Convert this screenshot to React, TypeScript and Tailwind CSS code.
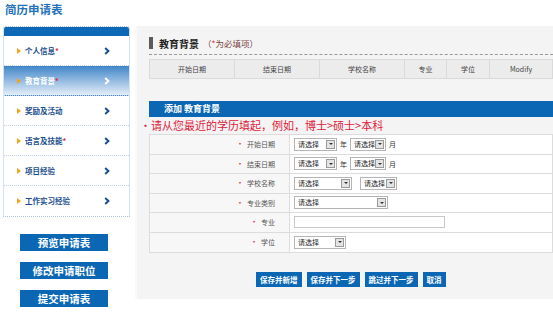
import React from "react";

const navItems = [
  { label: "个人信息", req: true },
  { label: "教育背景", req: true, active: true },
  { label: "奖励及活动" },
  { label: "语言及技能", req: true },
  { label: "项目经验" },
  { label: "工作实习经验" },
];

const columns = [
  { label: "开始日期", w: "w-[85px]" },
  { label: "结束日期", w: "w-[85px]" },
  { label: "学校名称", w: "w-[85px]" },
  { label: "专业", w: "w-[42px]" },
  { label: "学位", w: "w-[43px]" },
  { label: "Modify", w: "flex-1" },
];

function Select({ w, text = "请选择" }: { w: string; text?: string }) {
  return (
    <div className={`${w} h-[13px] flex items-center bg-white border border-[#b5b5b5] pl-[3px] pr-[1px]`}>
      <span className="flex-1 text-[7px] leading-none text-[#222]">{text}</span>
      <span className="w-[9px] h-[9px] bg-[#e4e4e4] border border-[#9a9a9a] flex items-center justify-center">
        <span className="w-0 h-0 border-l-[2px] border-r-[2px] border-t-[2px] border-l-transparent border-r-transparent border-t-[#333]" />
      </span>
    </div>
  );
}

function Row({ label, children }: { label: string; children: React.ReactNode }) {
  return (
    <div className="flex h-[19.5px] border-b border-[#dcdcdc] last:border-b-0">
      <div className="w-[140px] flex items-center justify-end pr-[14px] border-r border-[#dcdcdc] bg-[#f7f7f7] text-[7px] text-[#555]">
        <span className="text-[#e0303a] mr-[3px] text-[8px]">•</span>
        {label}
      </div>
      <div className="flex-1 flex items-center pl-[4px] gap-[3px] bg-white text-[7px] text-[#333]">{children}</div>
    </div>
  );
}

export default function App() {
  return (
    <div className="w-[553px] h-[312px] overflow-hidden bg-white font-['Noto_Sans_CJK_SC',sans-serif]">
      <div className="h-[26px] pl-[5px] pt-[2px] text-[11.5px] leading-[14px] font-bold text-[#2472b8]">简历申请表</div>

      <div className="flex">
        {/* Sidebar */}
        <div className="w-[135px] shrink-0 pl-[3px]">
          <div className="w-[127px] border border-dotted border-[#a9c3dd] rounded-t-[3px] overflow-hidden">
            <div className="h-[9px] bg-[#0d69b5]" />
            {navItems.map((it) => (
              <div
                key={it.label}
                className={`h-[30px] flex items-center pl-[13px] pr-[19px] border-b border-dotted border-[#c3d3e3] last:border-b-0 ${
                  it.active ? "bg-gradient-to-b from-[#3f86c7] to-[#e4eef8]" : "bg-white"
                }`}
              >
                <span className="w-0 h-0 border-t-[3px] border-b-[3px] border-l-[4px] border-t-transparent border-b-transparent border-l-[#f2a41a] mr-[4px]" />
                <span className={`flex-1 text-[7.5px] font-bold ${it.active ? "text-white" : "text-[#1c4f8e]"}`}>
                  {it.label}
                  {it.req && <span className="text-[#e0303a]">*</span>}
                </span>
                <svg width="6" height="8" viewBox="0 0 6 8" className={it.active ? "text-white" : "text-[#1c4f8e]"}>
                  <path d="M1.2 1 L4.4 4 L1.2 7" fill="none" stroke="currentColor" strokeWidth="2" />
                </svg>
              </div>
            ))}
          </div>
          <div className="mt-[17px] ml-[17px] flex flex-col gap-[11px]">
            {["预览申请表", "修改申请职位", "提交申请表"].map((b) => (
              <div key={b} className="w-[88px] h-[17px] bg-[#0b67b3] flex items-center justify-center text-[10.5px] font-bold text-white">
                {b}
              </div>
            ))}
          </div>
        </div>

        {/* Main panel */}
        <div className="flex-1 h-[273px] bg-[#f4f4f4] border-l-2 border-[#fafafa] pl-[12px] pt-[11px]">
          <div className="flex items-center h-[12px]">
            <span className="w-[4px] h-[12px] bg-[#5a5a5a] mr-[6px]" />
            <span className="text-[10px] font-bold text-[#222]">教育背景</span>
            <span className="ml-[4px] text-[8.5px] text-[#7b4545]">
              （<span className="text-[#e0303a]">*</span>为必填项）
            </span>
          </div>
          <div className="mt-[5px] border-t border-dashed border-[#9a9a9a]" />
          <div className="mt-[4px] h-[20px] flex bg-[#ececec] border border-[#dadada]">
            {columns.map((c) => (
              <div key={c.label} className={`${c.w} flex items-center justify-center text-[7px] text-[#444] border-r border-[#dadada] last:border-r-0`}>
                {c.label}
              </div>
            ))}
          </div>

          <div className="mt-[22px] h-[16px] bg-[#0b67b3] flex items-center pl-[15px] text-[9px] font-bold text-white">添加 教育背景</div>
          <div className="ml-[-9px] h-[17px] flex items-center text-[11px] text-[#e0203a]">•请从您最近的学历填起，例如，博士&gt;硕士&gt;本科</div>

          <div className="border border-[#dcdcdc]">
            <Row label="开始日期">
              <Select w="w-[43px]" />
              <span>年</span>
              <Select w="w-[36px]" />
              <span>月</span>
            </Row>
            <Row label="结束日期">
              <Select w="w-[43px]" />
              <span>年</span>
              <Select w="w-[36px]" />
              <span>月</span>
            </Row>
            <Row label="学校名称">
              <Select w="w-[58px]" />
              <span className="w-[2px]" />
              <Select w="w-[37px]" />
            </Row>
            <Row label="专业类别">
              <Select w="w-[94px]" />
            </Row>
            <Row label="专业">
              <div className="w-[151px] h-[12px] bg-white border border-[#c8c8c8]" />
            </Row>
            <Row label="学位">
              <Select w="w-[52px]" />
            </Row>
          </div>

          <div className="mt-[19px] flex gap-[5px] pl-[107px]">
            {["保存并新增", "保存并下一步", "跳过并下一步", "取消"].map((b) => (
              <div key={b} className="h-[15px] px-[4px] bg-[#0b67b3] flex items-center text-[7.5px] font-bold text-white">
                {b}
              </div>
            ))}
          </div>
        </div>
      </div>
    </div>
  );
}
